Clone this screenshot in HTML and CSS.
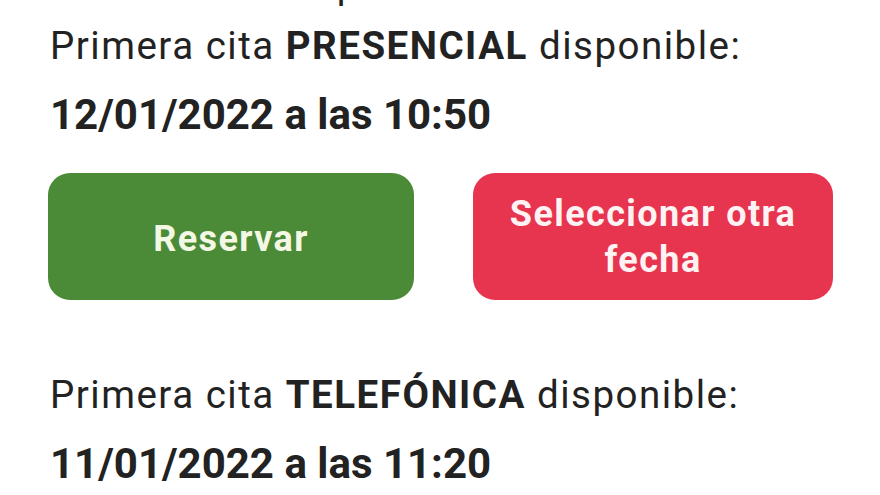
FILE: index.html
```html
<!DOCTYPE html>
<html lang="es">
<head>
<meta charset="utf-8">
<title>Cita</title>
<link rel="stylesheet" href="styles.css">
</head>
<body>
<main class="page">
  <p class="cut">Cita de Atención primaria</p>
  <section class="slot">
    <p class="label">Primera cita <strong>PRESENCIAL</strong> disponible:</p>
    <p class="date">12/01/2022 a las 10:50</p>
  </section>
  <div class="actions">
    <button class="btn btn-ok" type="button">Reservar</button>
    <button class="btn btn-alt" type="button">Seleccionar otra fecha</button>
  </div>
  <section class="slot slot-second">
    <p class="label">Primera cita <strong>TELEFÓNICA</strong> disponible:</p>
    <p class="date">11/01/2022 a las 11:20</p>
  </section>
</main>
</body>
</html>
```

FILE: styles.css
```css
html, body {
  margin: 0;
  padding: 0;
  background: #ffffff;
  overflow: hidden;
}
body {
  width: 880px;
  height: 495px;
  font-family: Roboto, "Noto Sans", sans-serif;
  color: #222222;
}
.page {
  padding-left: 50px;
  display: flex;
  flex-direction: column;
}
p {
  margin: 0;
}
.cut {
  font-size: 38px;
  line-height: 40px;
  margin-top: -35px;
}
.slot {
  margin-top: 5.5px;
}
.label {
  font-size: 38.5px;
  line-height: 69px;
  letter-spacing: 1.5px;
  white-space: nowrap;
}
.label strong {
  font-weight: 700;
}
.date {
  font-size: 42px;
  line-height: 68px;
  font-weight: 700;
  white-space: nowrap;
  margin-top: 1px;
}
.actions {
  margin-top: 24.5px;
  margin-left: -2px;
  display: grid;
  grid-template-columns: 366px 360px;
  column-gap: 59px;
}
.btn {
  height: 127px;
  border: none;
  border-radius: 22px;
  font-family: Roboto, "Noto Sans", sans-serif;
  font-size: 36px;
  line-height: 46px;
  font-weight: 700;
  letter-spacing: 1.4px;
  padding: 0 20px;
  text-align: center;
  cursor: pointer;
}
.btn-ok {
  background: #4b8a37;
  color: #f3f8e4;
  padding-top: 4px;
}
.btn-alt {
  background: #e8354f;
  color: #fff2f3;
}
.slot-second {
  margin-top: 59.5px;
}
```
